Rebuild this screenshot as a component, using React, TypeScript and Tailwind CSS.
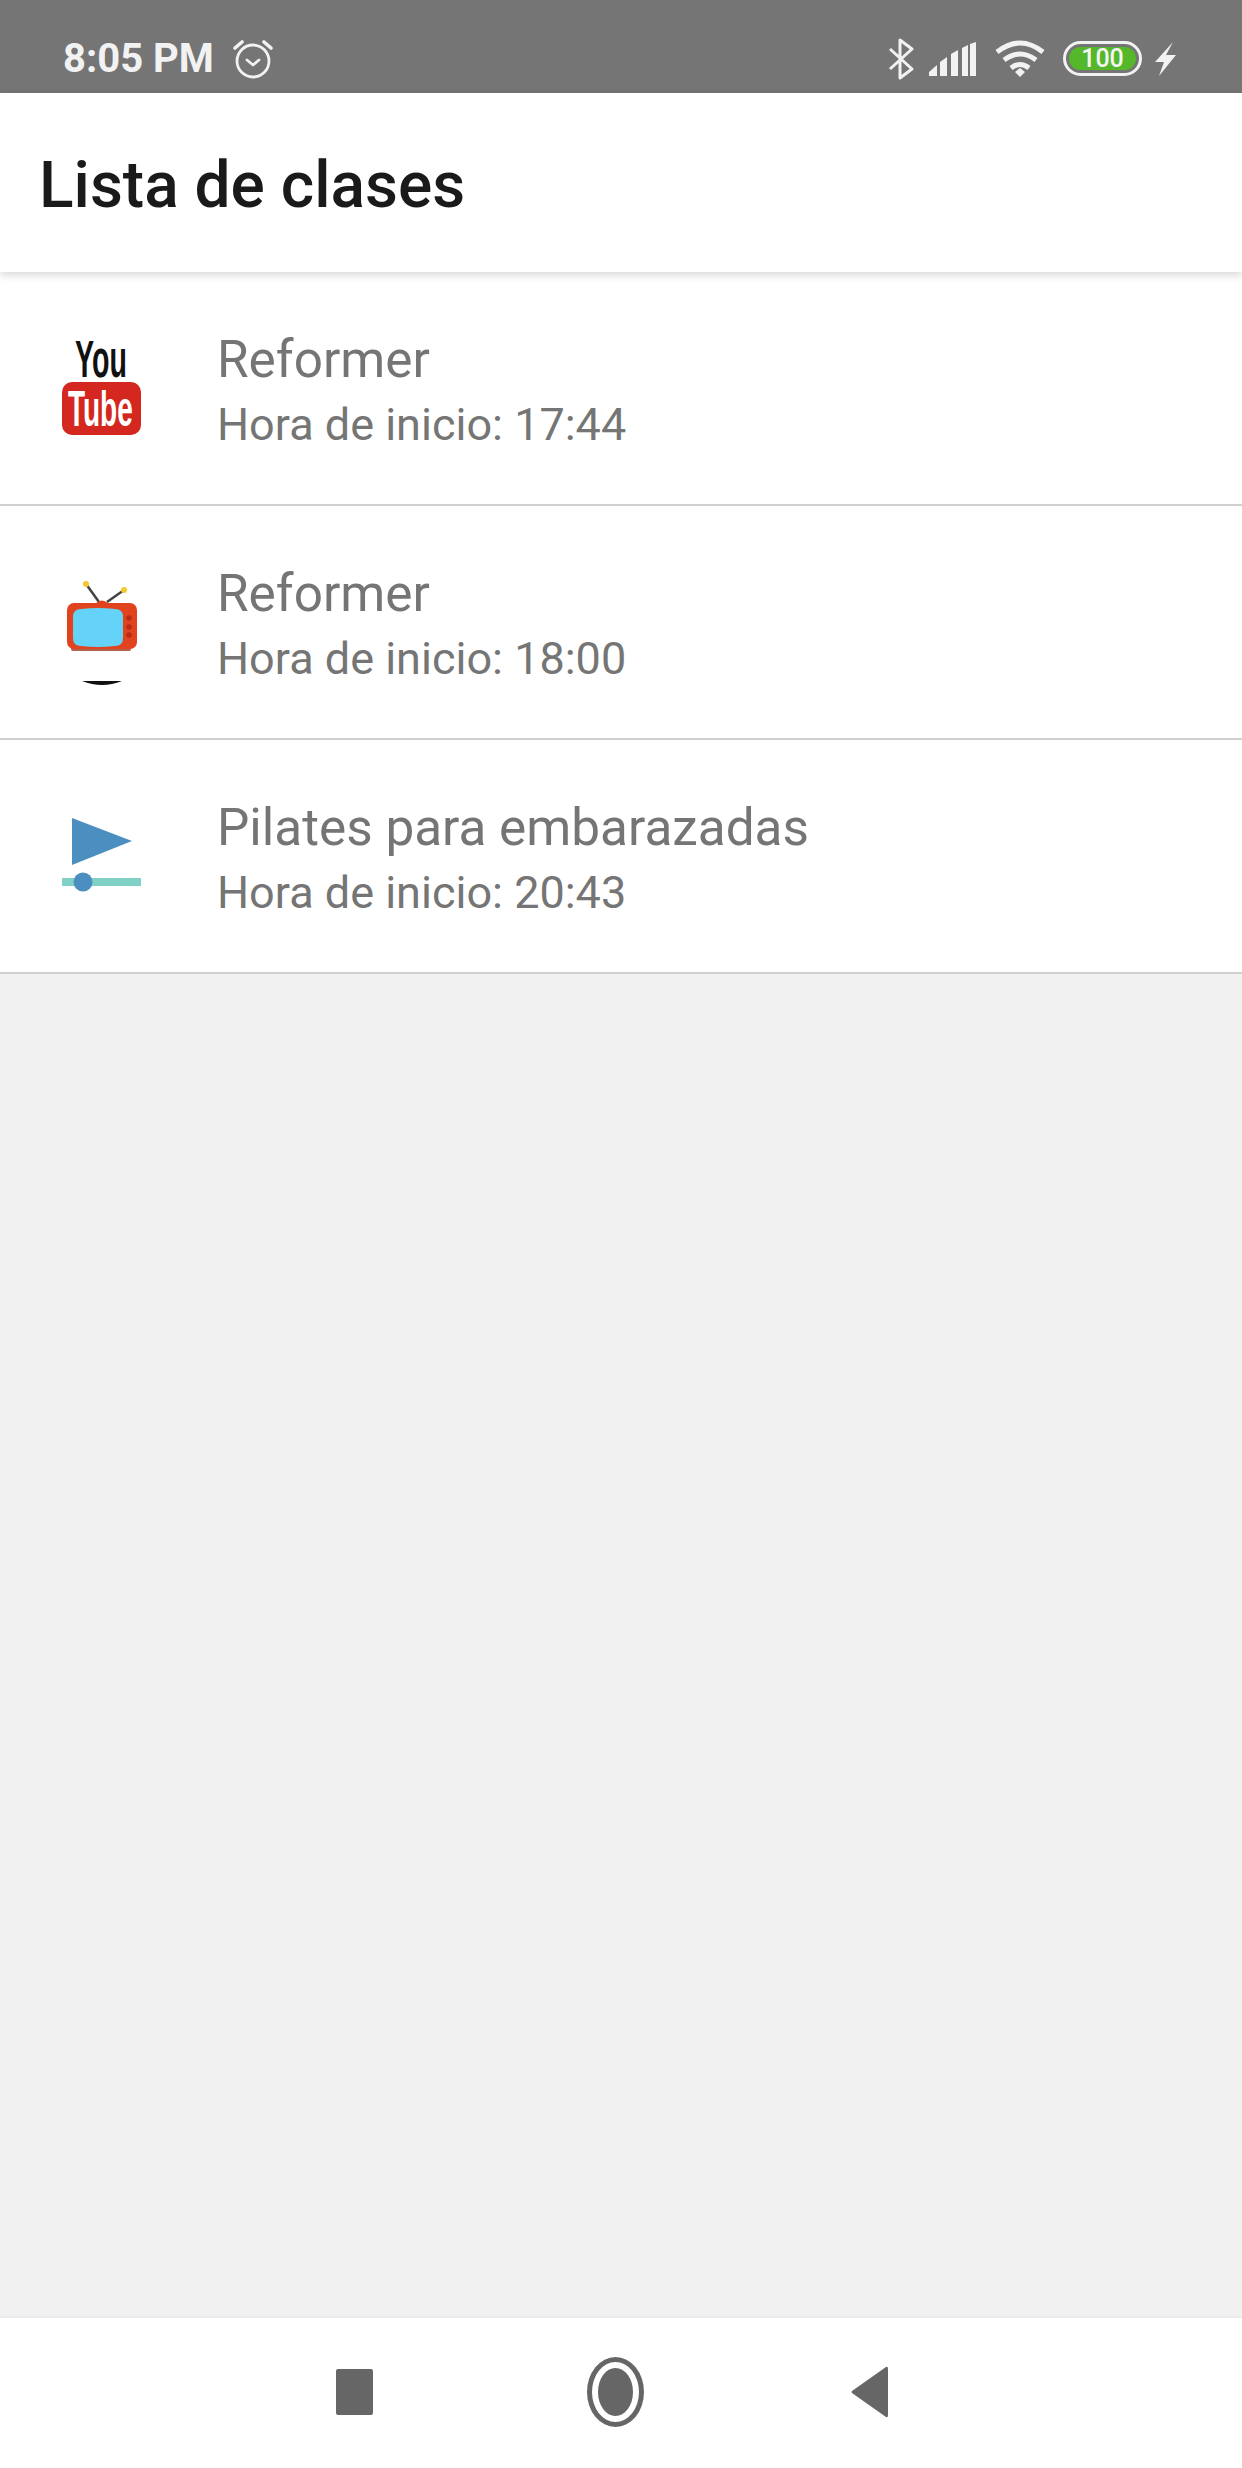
import type { ReactNode } from 'react'

function YoutubeIcon() {
  return (
    <svg width="140" height="140" viewBox="0 0 140 140">
      <text transform="translate(45 59) scale(0.55 1)" fontFamily="Liberation Sans, sans-serif" fontWeight="700" fontSize="52" fill="#111">You</text>
      <rect x="32" y="64" width="79" height="53" rx="10" fill="#d3271f" />
      <text transform="translate(38 108) scale(0.56 1)" fontFamily="Liberation Sans, sans-serif" fontWeight="700" fontSize="50" fill="#fff">Tube</text>
    </svg>
  )
}

function TvIcon() {
  return (
    <svg width="140" height="140" viewBox="0 0 140 140">
      <path d="M56 32 L69 50 M94 38 L77 50" stroke="#444" strokeWidth="2.5" />
      <circle cx="56" cy="32" r="3" fill="#f2c92e" />
      <circle cx="94" cy="38" r="3" fill="#f2c92e" />
      <path d="M66 51 Q72 46 78 51 L78 53 L66 53 Z" fill="#e2431f" />
      <rect x="41" y="53" width="60" height="46" rx="2" fill="#b5614c" />
      <rect x="37" y="51" width="70" height="46" rx="7" fill="#e2431f" />
      <path d="M43 65 Q43 57 51 57 Q68 55 85 57 Q93 57 93 65 L93 86 Q93 94 85 94 Q68 96 51 94 Q43 94 43 86 Z" fill="#65d2f7" />
      <circle cx="99" cy="66" r="2.8" fill="#b92c14" />
      <circle cx="99" cy="75" r="2.8" fill="#b92c14" />
      <circle cx="99" cy="83" r="2.8" fill="#b92c14" />
      <path d="M52 129 L92 129 Q72 137 52 129 Z" fill="#111" />
    </svg>
  )
}

function PlayIcon() {
  return (
    <svg width="140" height="140" viewBox="0 0 140 140">
      <path d="M42 32 L102 55 L42 79 Z" fill="#4a8fbf" />
      <rect x="32" y="92" width="79" height="8" fill="#7fd0c6" />
      <circle cx="53" cy="96" r="9.5" fill="#4a8fbf" />
    </svg>
  )
}

function ClassRow({ icon, title, time }: { icon: ReactNode; title: string; time: string }) {
  return (
    <div className="h-[234px] bg-white border-b-2 border-[#d0d0d0] flex items-center pl-[30px] gap-[47px]">
      {icon}
      <div className="text-[#757575] mt-[7px]">
        <div className="text-[51.3px] leading-[66px]">{title}</div>
        <div className="text-[45px] leading-[63px]">Hora de inicio: {time}</div>
      </div>
    </div>
  )
}

export default function App() {
  return (
    <div className="h-[2468px] w-[1242px] flex flex-col bg-[#f1f1f1] font-['Roboto',sans-serif] overflow-hidden">
      <div className="h-[93px] shrink-0 bg-[#757575] flex items-center justify-between pl-[63px] pr-[66px] pt-[24px] text-[#f2f2f2]">
        <div className="flex items-center gap-[18px]">
          <span className="text-[40px] font-bold">8:05 PM</span>
          <svg width="42" height="42" viewBox="0 0 42 42" fill="none" stroke="#f2f2f2" strokeWidth="2.8" strokeLinecap="round" strokeLinejoin="round">
            <circle cx="21" cy="23" r="16" />
            <path d="M15 22 L21 27 L27 22" />
            <path d="M3 10 L10 4 M39 10 L32 4" strokeWidth="3.6" />
          </svg>
        </div>
        <div className="flex items-center gap-[16px]">
          <svg width="28" height="42" viewBox="0 0 28 42" fill="none" stroke="#f2f2f2" strokeWidth="3" strokeLinejoin="round">
            <path d="M3 11 L25 31 L13 40 L13 2 L25 11 L3 31" />
          </svg>
          <svg width="47" height="34" viewBox="0 0 47 34" fill="#f2f2f2" className="-ml-[2px] mr-[3px]">
            <path d="M0 34 L0 30 L8 23 L8 34 Z" />
            <path d="M11 34 L11 20 L18 15 L18 34 Z" />
            <path d="M22 34 L22 12 L29 8 L29 34 Z" />
            <path d="M33 34 L33 6 L39 3 L39 34 Z" />
            <path d="M41 34 L41 2 L47 0 L47 34 Z" />
          </svg>
          <svg width="50" height="38" viewBox="0 0 50 38" fill="none" stroke="#f2f2f2" strokeWidth="5">
            <path d="M2 12 Q25 -6 48 12" />
            <path d="M9 20 Q25 8 41 20" />
            <path d="M16 28 Q25 21 34 28" />
            <path d="M20 32 L25 28 L30 32 L25 37 Z" fill="#f2f2f2" stroke="none" />
          </svg>
          <div className="w-[79px] h-[35px] ml-[2px] rounded-full border-[3px] border-[#f2f2f2] p-[3px]">
            <div className="h-full rounded-full bg-[#55b82a] flex items-center justify-center text-[25px] font-medium leading-none text-[#f4f4f4]">100</div>
          </div>
          <svg width="22" height="34" viewBox="0 0 22 34" fill="#f2f2f2" className="-ml-[4px]">
            <path d="M19 0 L1 20 L10 20 L5 34 L22 13 L12 13 Z" />
          </svg>
        </div>
      </div>
      <div className="h-[179px] shrink-0 bg-white flex items-center pl-[39px] pt-[6px] shadow-[0_3px_8px_rgba(0,0,0,0.16)] relative text-[#1a1a1a] font-medium text-[64px]">
        Lista de clases
      </div>
      <ClassRow icon={<YoutubeIcon />} title="Reformer" time="17:44" />
      <ClassRow icon={<TvIcon />} title="Reformer" time="18:00" />
      <ClassRow icon={<PlayIcon />} title="Pilates para embarazadas" time="20:43" />
      <div className="flex-1" />
      <div className="h-[152px] shrink-0 bg-white border-t-2 border-[#ebebeb] flex items-center pb-[2px]">
        <div className="w-[336px]" />
        <div className="w-[37px] h-[46px] bg-[#666] rounded-[2px]" />
        <div className="w-[214px]" />
        <div className="w-[57px] h-[70px] rounded-[50%] border-[5px] border-[#666] p-[6px]">
          <div className="w-full h-full rounded-[50%] bg-[#666]" />
        </div>
        <div className="w-[207px]" />
        <svg width="37" height="52" viewBox="0 0 37 52" fill="#666">
          <path d="M35 1 Q37 0 37 3 L37 49 Q37 52 35 51 L1 27 Q0 26 1 25 Z" />
        </svg>
      </div>
    </div>
  )
}
